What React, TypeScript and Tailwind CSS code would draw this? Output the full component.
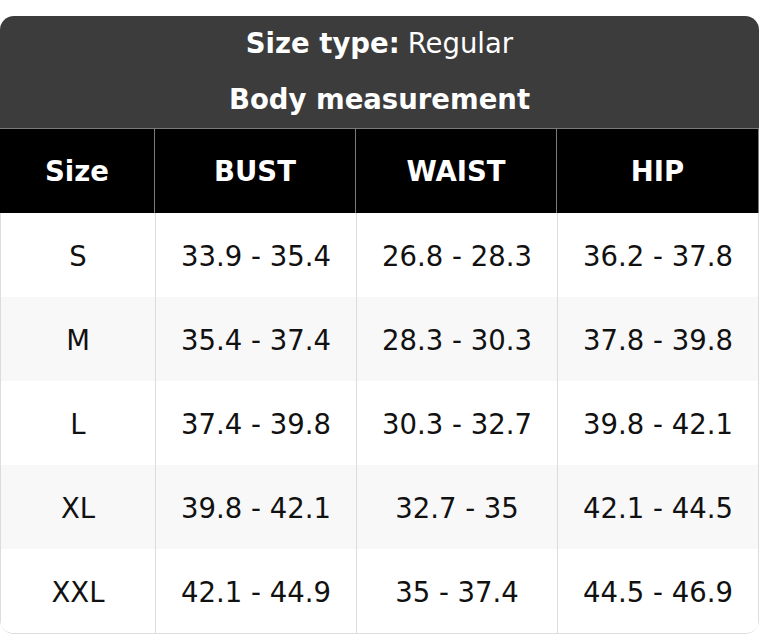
const rows = [
  { size: "S", bust: "33.9 - 35.4", waist: "26.8 - 28.3", hip: "36.2 - 37.8" },
  { size: "M", bust: "35.4 - 37.4", waist: "28.3 - 30.3", hip: "37.8 - 39.8" },
  { size: "L", bust: "37.4 - 39.8", waist: "30.3 - 32.7", hip: "39.8 - 42.1" },
  { size: "XL", bust: "39.8 - 42.1", waist: "32.7 - 35", hip: "42.1 - 44.5" },
  { size: "XXL", bust: "42.1 - 44.9", waist: "35 - 37.4", hip: "44.5 - 46.9" },
];

const cols = "grid grid-cols-[154px_201px_201px_1fr]";

export default function App() {
  return (
    <div className="min-h-screen bg-white pt-4 font-['DejaVu_Sans',sans-serif]">
      <div className="w-[759px] overflow-hidden rounded-[14px] border-b border-[#dcdcdc]">
        <div className="bg-[#3c3c3c] text-white text-[27.5px]">
          <div className="flex h-14 items-center justify-center">
            <span className="font-bold">Size type:</span>
            <span className="ml-2">Regular</span>
          </div>
          <div className="flex h-14 items-center justify-center font-bold">
            Body measurement
          </div>
        </div>
        <div className={`${cols} h-[85px] border-t border-[#7a7a7a] bg-black text-[27.5px] font-bold text-white`}>
          {["Size", "BUST", "WAIST", "HIP"].map((h, i) => (
            <div
              key={h}
              className={`flex items-center justify-center pt-0.5 ${i > 0 ? "border-l border-[#7a7a7a]" : ""} ${i === 3 ? "border-r border-[#7a7a7a]" : ""}`}
            >
              {h}
            </div>
          ))}
        </div>
        {rows.map((r, ri) => (
          <div
            key={r.size}
            className={`${cols} h-[84px] border-x border-[#dcdcdc] text-[27.5px] text-[#111] ${ri % 2 === 1 ? "bg-[#f8f8f8]" : "bg-white"}`}
          >
            {[r.size, r.bust, r.waist, r.hip].map((v, i) => (
              <div
                key={i}
                className={`flex items-center justify-center pt-1 ${i > 0 ? "border-l border-[#dcdcdc]" : ""}`}
              >
                {v}
              </div>
            ))}
          </div>
        ))}
      </div>
    </div>
  );
}
